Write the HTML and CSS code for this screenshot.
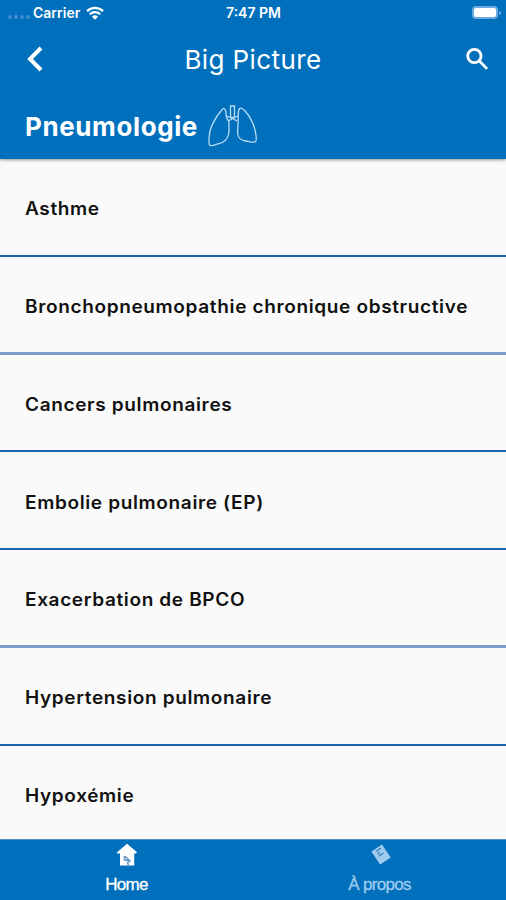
FILE: index.html
```html
<!DOCTYPE html>
<html lang="fr">
  <head>
    <meta charset="UTF-8" />
    <meta name="viewport" content="width=device-width, initial-scale=1" />
    <title>Big Picture</title>
    <link rel="stylesheet" href="styles.css">
  </head>
  <body>
    <div class="app">
      <header class="header">
        <div class="status-bar">
          <div class="carrier">
            <span class="signal"><i></i><i></i><i></i><i></i></span>
            <span>Carrier</span>
            <svg class="wifi" viewBox="0 0 18 14">
              <path d="M1 5.2a11.4 11.4 0 0 1 16 0M3.8 8.2a7.4 7.4 0 0 1 10.4 0" />
              <path class="wifi-dot" d="M9 13.8l-3-3a4.3 4.3 0 0 1 6 0z" />
            </svg>
          </div>
          <span class="time">7:47 PM</span>
          <div class="battery-wrap">
            <div class="battery"></div>
            <div class="battery-tip"></div>
          </div>
        </div>

        <div class="nav-bar">
          <svg class="back" viewBox="0 0 18 26">
            <path d="M15 2L4 13l11 11" />
          </svg>
          <h1>Big Picture</h1>
          <svg class="search" viewBox="0 0 24 24">
            <circle cx="9" cy="8.6" r="6.4" />
            <path d="M13.8 13.4l7.4 7.6" />
          </svg>
        </div>

        <div class="section-title">
          <h2>Pneumologie</h2>
          <svg class="lungs" viewBox="0 0 50 42">
            <path d="M16.800 4c-1-.8-1.800-.5-3 1C7.500 12 1.500 23 1.300 31c-.5 4.500-.8 8.500.7 9.400 2.500 1 6-1.200 9-1.800 5-1 8.300-5 9.500-9 1-4 .4-8 .3-13.500-1.500-1.500-2.300-2.500-2.500-5C18 8 18.200 5.500 16.800 4z" />
            <path d="M31.500 3.500c1.500-1.300 3.500.3 5.200 2 6.300 6.500 11 17.500 11.500 26.500.3 3 .2 4.500-1.200 5-3 .8-6-.7-9-1-4.500-.5-7.500-2.500-8.200-6.500-.5-4 .2-8 .2-12 .5-4-.7-11 1.500-14z" />
            <path d="M22.500 1h4v11.500h-4zM18.500 11l4 1.500M26.500 12.500l3.500-1.500M20.500 16l4-2.500 4.500 2.500" />
          </svg>
        </div>
      </header>

      <main class="list">
        <a class="item"><span>Asthme</span></a>
        <a class="item"><span>Bronchopneumopathie chronique obstructive</span></a>
        <a class="item"><span>Cancers pulmonaires</span></a>
        <a class="item"><span>Embolie pulmonaire (EP)</span></a>
        <a class="item"><span>Exacerbation de BPCO</span></a>
        <a class="item"><span>Hypertension pulmonaire</span></a>
        <a class="item"><span>Hypoxémie</span></a>
      </main>

      <nav class="tab-bar">
        <a class="tab active">
          <svg viewBox="0 0 24 24">
            <path d="M12 .8L22 9.300l-1 1.200h-1.800v12H5v-12H2.500L1.800 9.500z" />
            <path class="home-mark" d="M9.500 13v4l5 .5M10 13.500l5 4.500-2.500 1.500 1 3" />
          </svg>
          <span>Home</span>
        </a>
        <a class="tab">
          <svg viewBox="0 0 24 24">
            <path d="M14 1.500l8.700 13-10 6.800-1-.4L3.400 8.500z" />
            <path class="page-mark" d="M8 8.500l5-3.500M9.700 10.800l2-1.300M11 13l4.500-3" />
          </svg>
          <span>À propos</span>
        </a>
      </nav>
    </div>
  </body>
</html>
```
FILE: styles.css
```css
:root {
  --blue: #0070bd;
  --page: #fafafa;
  --line: #1d62b0;
}
body,
h1,
h2 {
  margin: 0;
}
body {
  background: var(--page);
  font-family: Inter, "Liberation Sans", sans-serif;
}
.app {
  display: flex;
  flex-direction: column;
  height: 900px;
  overflow: hidden;
}

/* Header */
.header {
  flex: none;
  height: 159px;
  background: var(--blue);
  color: white;
  box-shadow: 0 1px 3px rgba(0, 0, 0, 0.4);
  z-index: 1;
}
.status-bar {
  display: grid;
  grid-template-columns: 1fr auto 1fr;
  align-items: center;
  height: 25px;
  padding: 0 5px 0 6px;
  font-size: 14px;
  font-weight: 600;
}
.carrier {
  display: flex;
  align-items: center;
}
.signal {
  display: flex;
  gap: 2px;
  width: 25px;
  padding: 8px 0 0 2px;
}
.signal i {
  width: 4px;
  height: 4px;
  border-radius: 50%;
  background: #3f8dcb;
}
.wifi {
  width: 18px;
  height: 14px;
  margin-left: 6px;
  fill: none;
  stroke: white;
  stroke-width: 2.3;
}
.wifi .wifi-dot {
  fill: white;
  stroke: none;
}
.battery-wrap {
  display: flex;
  align-items: center;
  justify-content: flex-end;
  gap: 1px;
}
.battery {
  width: 22px;
  height: 9px;
  border: 2px solid #6aaade;
  border-radius: 4px;
  background: white;
}
.battery-tip {
  width: 2px;
  height: 4px;
  border-radius: 0 2px 2px 0;
  background: #6aaade;
}
.nav-bar {
  display: grid;
  grid-template-columns: 1fr auto 1fr;
  align-items: center;
  height: 68px;
  padding: 0 16px;
}
.nav-bar h1 {
  font-size: 26px;
  font-weight: 400;
  letter-spacing: 0.4px;
}
.back {
  width: 18px;
  height: 26px;
  margin-left: 10px;
  fill: none;
  stroke: white;
  stroke-width: 4;
}
.search {
  justify-self: end;
  width: 25px;
  height: 25px;
  fill: none;
  stroke: white;
  stroke-width: 2.7;
}
.section-title {
  display: flex;
  align-items: center;
  gap: 10px;
  height: 66px;
  padding-left: 25px;
}
.section-title h2 {
  font-size: 26px;
  font-weight: 700;
  letter-spacing: 0.6px;
}
.lungs {
  width: 50px;
  height: 42px;
  fill: none;
  stroke: #b8dcf6;
  stroke-width: 1.3;
}

/* List */
.list {
  flex: 1;
  min-height: 0;
  overflow: hidden;
}
.item {
  display: flex;
  align-items: center;
  box-sizing: border-box;
  height: 97.8px;
  padding: 4px 0 0 25px;
  border-bottom: 2px solid var(--line);
  color: #111;
  font-size: 18px;
  font-weight: 600;
  letter-spacing: 0.6px;
  white-space: nowrap;
}
.item span {
  transform: scaleX(1.057);
  transform-origin: left;
}
.item:nth-child(3n + 2) {
  border-bottom: 3px solid #7f9bcb;
}

/* Tab bar */
.tab-bar {
  flex: none;
  display: flex;
  height: 60px;
  border-top: 1px solid #5792c5;
  background: var(--blue);
  color: #9fcbee;
}
.tab {
  flex: 1;
  display: flex;
  flex-direction: column;
  align-items: center;
  padding-top: 3px;
  font-family: "Liberation Sans", sans-serif;
  font-size: 17px;
  letter-spacing: -0.7px;
}
.tab svg {
  width: 24px;
  height: 24px;
  fill: currentColor;
}
.tab span {
  margin-top: 8px;
  line-height: 20px;
  -webkit-text-stroke: 0.3px currentColor;
}
.active {
  color: white;
}
.home-mark,
.page-mark {
  fill: none;
  stroke: #6598c4;
  stroke-width: 1.5;
}
.page-mark {
  stroke: #397fb8;
}
```
